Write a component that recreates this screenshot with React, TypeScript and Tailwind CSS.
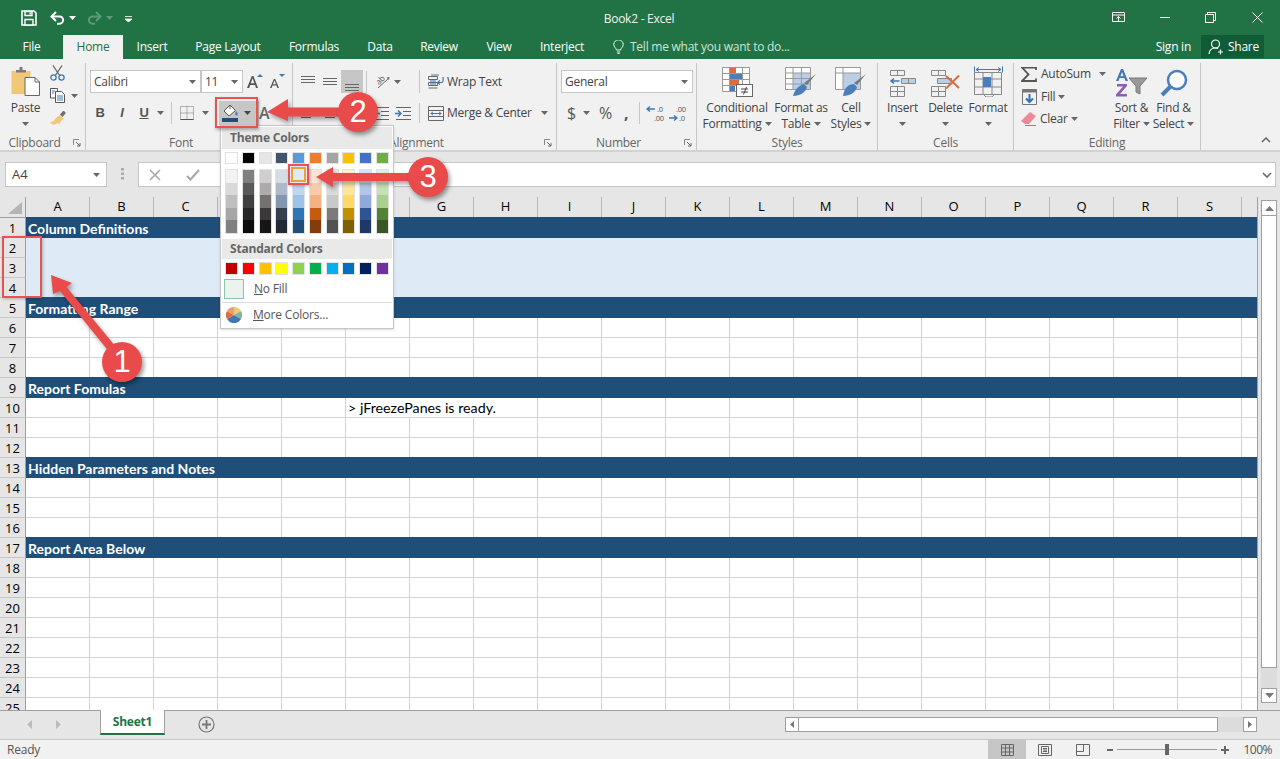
import React from "react";

const UI = "font-['Open_Sans','Noto_Sans',sans-serif]";

const Chev = ({ c = "#666", className = "" }: { c?: string; className?: string }) => (
  <svg width="7" height="4" viewBox="0 0 7 4" className={"shrink-0 " + className}><path d="M0 0h7L3.5 4z" fill={c} /></svg>
);
const Launcher = () => (
  <svg width="8" height="8" viewBox="0 0 8 8" className="shrink-0"><path d="M.5 6V.5H6" fill="none" stroke="#888" /><path d="M3 3l4 4M7 4v3H4" fill="none" stroke="#666" /></svg>
);
const Sep = ({ h = "h-[22px]", mx = "" }: { h?: string; mx?: string }) => <div className={`w-px bg-[#c6c6c6] shrink-0 ${h} ${mx}`} />;

const Save = () => (
  <svg width="16" height="16" viewBox="0 0 16 16"><path d="M1 1h12l2 2v12H1z" fill="none" stroke="#fff" strokeWidth="1.6" /><path d="M4 1.5h7v4H4zM4 9.5h8V15H4z" fill="#217346" stroke="#fff" strokeWidth="1.4" /><path d="M8.5 2.5h1.4v2H8.5z" fill="#fff" /></svg>
);
const Undo = ({ c, flip = false }: { c: string; flip?: boolean }) => (
  <svg width="15" height="14" viewBox="0 0 15 14" style={flip ? { transform: "scaleX(-1)" } : undefined}>
    <path d="M2 5.5h7.5a3.6 3.6 0 0 1 0 7.2H7" fill="none" stroke={c} strokeWidth="2" />
    <path d="M6 1L1.5 5.5 6 10" fill="none" stroke={c} strokeWidth="2" />
  </svg>
);
const PersonPlus = () => (
  <svg width="17" height="16" viewBox="0 0 17 16" fill="none" stroke="#fff" strokeWidth="1.2">
    <circle cx="7.5" cy="5" r="4" /><path d="M1 15c.3-3.5 2.6-6 6.5-6 1 0 2 .2 2.6.6" /><path d="M12.5 10.5v5M10 13h5" />
  </svg>
);
const Paste = () => (
  <svg width="30" height="30" viewBox="0 0 30 30">
    <rect x="0.5" y="5" width="19" height="23" fill="#f0c878" />
    <path d="M5 6V4h3.5V1h3v3H15v2.5H5z" fill="#7c7c7c" />
    <path d="M14 11.5h10l4.5 4.5v13.5H14z" fill="#fff" stroke="#666" />
    <path d="M24 11.5V16h4.5" fill="none" stroke="#666" />
  </svg>
);
const Scissors = () => (
  <svg width="15" height="16" viewBox="0 0 15 16" fill="none">
    <path d="M3 .5l7 10.5M12 .5L5 11" stroke="#666" strokeWidth="1.3" />
    <circle cx="3.5" cy="12.5" r="2.6" stroke="#3f78b5" strokeWidth="1.3" /><circle cx="11.5" cy="12.5" r="2.6" stroke="#3f78b5" strokeWidth="1.3" />
  </svg>
);
const Copy = () => (
  <svg width="16" height="15" viewBox="0 0 16 15" fill="none" stroke="#555">
    <path d="M.5.5h7V10h-7z" fill="#fff" /><path d="M5.5 3.5h6l3 3v8h-9z" fill="#fff" />
    <path d="M7 8h6M7 10h6M7 12h6M2 3h3M2 5h2" stroke="#3f78b5" />
  </svg>
);
const Painter = () => (
  <svg width="17" height="15" viewBox="0 0 17 15">
    <path d="M10 5l4 4-2 1-3 4-2-1-1 1-3 1c-1-1-2-1.500-3-3 3 0 4-1 5-3l2-2z" fill="#f0c878" />
    <path d="M10 4.500L13 1c1-.5 3 1 2.500 2.500L12.500 7z" fill="#6f6f6f" />
  </svg>
);
const FontA = ({ size, up }: { size: number; up: boolean }) => (
  <svg width="17" height="17" viewBox="0 0 17 17">
    <path d={size === 2 ? "M0 15L4.800 3h1.600L11 15H9l-1-3H3.200l-1 3zM3.800 10.300h3.600L5.600 5.300z" : "M1 15L4.800 6h1.400L10 15H8.400l-.9-2.400H3.500L2.600 15zM4 11.200h3l-1.500-4z"} fill="#555" />
    <path d={up ? "M10 4l3-3 3 3z" : "M10 1h6l-3 3z"} fill="#3f78b5" />
  </svg>
);
const Bars = ({ lines }: { lines: [number, number, number][] }) => (
  <svg width="16" height="14" viewBox="0 0 16 14">
    {lines.map(([y, x1, x2], i) => <path key={i} d={`M${x1} ${y}.5H${x2}`} stroke="#666" />)}
  </svg>
);
const Borders = () => (
  <svg width="14" height="14" viewBox="0 0 14 14" fill="none"><path d="M.5.5h13v13H.5zM.5 7h13M7 .5v13" stroke="#777" strokeDasharray="1 1" /><path d="M.5 13.500h13" stroke="#555" /></svg>
);
const FillBucket = () => (
  <svg width="18" height="18" viewBox="0 0 18 18">
    <path d="M8 1L2 7l5 5 6.500-5.500z" fill="#fff" stroke="#555" />
    <path d="M8 1v4" stroke="#555" />
    <path d="M14 7c1.500 2 2 3 1.500 4-.5.500-1.500.500-2 0-.5-1 0-2 .5-4z" fill="#3f78b5" />
    <rect x="0" y="14" width="16" height="4" fill="#1f4e79" />
  </svg>
);
const Orient = () => (
  <svg width="18" height="17" viewBox="0 0 18 17">
    <text x="3" y="11" fontSize="8" fill="#555" transform="rotate(-45 6 8)" fontFamily="Open Sans">ab</text>
    <path d="M5 15L16 5" stroke="#666" /><path d="M16.500 4l-3 .5 2.500 2.500z" fill="#666" />
  </svg>
);
const Indent = ({ dir }: { dir: "l" | "r" }) => (
  <svg width="16" height="13" viewBox="0 0 16 13" fill="none">
    <path d="M1 .5h15M8 4.500h8M8 8.500h8M1 12.500h15" stroke="#666" />
    <path d={dir === "l" ? "M7 6.500H1M4 3.500l-3 3 3 3" : "M0 6.500h6M3 3.500l3 3-3 3"} stroke="#3f78b5" strokeWidth="1.5" />
  </svg>
);
const Wrap = () => (
  <svg width="16" height="16" viewBox="0 0 16 16" fill="none">
    <path d="M.5 2.500h9v3h-9zM.5 8.500h9v3h-9zM.5 14h9" stroke="#666" />
    <path d="M3 1h8M2 7h6M2 10h6" stroke="#3f78b5" />
    <path d="M9 8.500h5c1 0 1.500-3.500 1-5.500M12 6.500L9.500 8.500 12 10.500" stroke="#3f78b5" strokeWidth="1.2" />
  </svg>
);
const Merge = () => (
  <svg width="16" height="15" viewBox="0 0 16 15" fill="none">
    <path d="M.5.5h15v14H.5zM.5 4.500h15M.5 10.500h15" stroke="#666" />
    <path d="M2.500 7.500h11M5 5.800L3 7.500l2 1.700M11 5.800l2 1.700-2 1.700" stroke="#3f78b5" />
  </svg>
);
const Dec = ({ inc }: { inc: boolean }) => (
  <svg width="21" height="17" viewBox="0 0 21 17">
    <text x={inc ? 8 : 11} y="7" fontSize="7.500" fill="#555" fontFamily="Open Sans">{inc ? ".00" : ".0"}</text>
    <text x={inc ? 11 : 8} y="16" fontSize="7.500" fill="#555" fontFamily="Open Sans">{inc ? ".0" : ".00"}</text>
    <path d={inc ? "M1 13h8M6 10.500L9 13l-3 2.500" : "M1 4h8M4 1.500L1 4l3 2.500"} fill="none" stroke="#3f78b5" strokeWidth="1.4" />
  </svg>
);
const CondFmt = () => (
  <svg width="31" height="30" viewBox="0 0 31 30">
    <path d="M.5.500h27v24H.5zM.5 6.500h27M.5 12.500h27M.5 18.500h27M7.500.500v24M20.500.500v24" fill="#fff" stroke="#999" />
    <rect x="8" y="1" width="6" height="5" fill="#dd6b3f" /><rect x="8" y="7" width="12" height="5" fill="#4a7ebb" />
    <rect x="8" y="13" width="9" height="5" fill="#dd6b3f" /><rect x="8" y="19" width="5" height="5" fill="#4a7ebb" />
    <rect x="14.500" y="17.500" width="16" height="12" fill="#fff" stroke="#666" />
    <path d="M19 22h7M19 25h7M24.500 20l-3 7.500" stroke="#444" fill="none" />
  </svg>
);
const FmtTable = () => (
  <svg width="32" height="30" viewBox="0 0 32 30">
    <path d="M.5.500h25v22H.5z" fill="#fff" stroke="#999" />
    <rect x="8" y="6" width="17" height="16" fill="#b9cfe6" />
    <path d="M.5 6h25M.5 11.500h25M.5 17h25M8 .5v22M16.500.5v22" stroke="#999" fill="none" />
    <path d="M31 7L22 18l-3-2z" fill="#777" />
    <path d="M8 29c2-8 7-11 11-12l3 3c-1 5-7 9-14 9z" fill="#4a7ebb" />
  </svg>
);
const CellStyles = () => (
  <svg width="32" height="30" viewBox="0 0 32 30">
    <path d="M.5.500h25v22H.5z" fill="#fff" stroke="#999" />
    <rect x="8" y="6" width="17" height="16" fill="#b9cfe6" />
    <path d="M.5 6h25M8 .5v22" stroke="#999" fill="none" />
    <path d="M31 7L22 18l-3-2z" fill="#777" />
    <path d="M8 29c1-5 2-11 11-12l3 3c-1 5-7 9-14 9z" fill="#4a7ebb" />
  </svg>
);
const InsertIc = () => (
  <svg width="27" height="27" viewBox="0 0 27 27" fill="none" stroke="#888">
    <path d="M1.500.500h14v5h-14zM8.500.500v5M1.500 16.500h14v10h-14zM1.500 21.500h14M8.500 16.500v10" />
    <path d="M12.500 8.500h14v5h-14zM19.500 8.500v5" fill="#b9cfe6" />
    <path d="M10.500 11H2M5 8.500L2 11l3 2.500" stroke="#3f78b5" strokeWidth="1.5" />
  </svg>
);
const DeleteIc = () => (
  <svg width="31" height="27" viewBox="0 0 31 27" fill="none" stroke="#888">
    <path d="M1.500.500h14v5h-14zM8.500.500v5M1.500 16.500h14v10h-14zM1.500 21.500h14M8.500 16.500v10" />
    <path d="M7.500 8.500h14v5h-14z" fill="#b9cfe6" />
    <path d="M16 6l13 12M29 5.500L16 18.500" stroke="#dd6b3f" strokeWidth="2" />
  </svg>
);
const FormatIc = () => (
  <svg width="29" height="31" viewBox="0 0 29 31" fill="none" stroke="#888">
    <path d="M2 3.500h25M5 1.500l-3 2 3 2M24 1.500l3 2-3 2M.5.500v6M28.500.500v6" stroke="#3f78b5" />
    <path d="M.5 6.500h27v22H.5zM.5 13h27M.5 21h27M9 6.500v22M18 6.500v22" />
    <rect x="9" y="11" width="8" height="10" fill="#4a7ebb" stroke="none" />
    <path d="M10 29l2 2h6l2-2" />
  </svg>
);
const Sigma = () => (
  <svg width="16" height="15" viewBox="0 0 16 15"><path d="M15 3V.5H1l6.500 7L1 14h14v-2.500" fill="none" stroke="#555" strokeWidth="1.800" /></svg>
);
const FillDown = () => (
  <svg width="15" height="16" viewBox="0 0 15 16" fill="none">
    <path d="M.5.500h14v15H.5z" stroke="#777" /><path d="M.5.500h14v3H.5z" fill="#777" />
    <path d="M7.500 5v8M4 9.500l3.500 3.500L11 9.500" stroke="#2e75b5" strokeWidth="2" />
  </svg>
);
const Eraser = () => (
  <svg width="15" height="14" viewBox="0 0 15 14"><path d="M9 0l6 4-7 8H4L0 9z" fill="#ea8a98" /><path d="M4 13.500h11" stroke="#888" /></svg>
);
const SortIc = () => (
  <svg width="32" height="28" viewBox="0 0 32 28">
    <path d="M0 12L5 0h2l5 12h-2.500l-1-3h-5l-1 3zM4.500 7.200h3L6 3z" fill="#3f78b5" />
    <path d="M1 15h10v2l-7 8h7v2.500H0v-2l7-8H1z" fill="#8a5fb5" />
    <path d="M13 9h18l-7 8v8l-4-2v-6z" fill="#999" stroke="#777" />
  </svg>
);
const Find = () => (
  <svg width="28" height="28" viewBox="0 0 28 28" fill="none">
    <circle cx="17" cy="11" r="9" stroke="#4a7ebb" strokeWidth="2.500" fill="#fff" />
    <path d="M10.500 17.500L2 26" stroke="#4a7ebb" strokeWidth="4" />
  </svg>
);

const Big = ({ icon, l1, l2, w }: { icon: React.ReactNode; l1: string; l2?: string; w: string }) => (
  <div className={`flex flex-col items-center shrink-0 ${w}`}>
    <div className="h-[34px] flex items-end justify-center">{icon}</div>
    <div className="h-[14px] mt-[4px] leading-[14px] whitespace-nowrap">{l1}</div>
    <div className="h-[16px] mt-[1px] leading-[16px] whitespace-nowrap flex items-center gap-[3px]">{l2}<Chev /></div>
  </div>
);

const Group = ({ w, label, launcher, children, lc = "" }: { w: string; label: string; launcher?: boolean; children: React.ReactNode; lc?: string }) => (
  <div className={`${w} shrink-0 h-full flex flex-col border-r border-[#c6c6c6]`}>
    <div className="h-[75px] flex">{children}</div>
    <div className={`h-[14px] flex items-center text-[#666] ${lc}`}>
      <span className="flex-1 text-center leading-[14px]">{label}</span>
      {launcher && <span className="w-[16px] pr-[4px] flex justify-end"><Launcher /></span>}
    </div>
  </div>
);

const Box = ({ w, text }: { w: string; text: string }) => (
  <div className={`${w} h-[23px] bg-white border border-[#c6c6c6] flex items-center justify-between pl-[3px] pr-[4px] shrink-0`}>
    <span>{text}</span><Chev />
  </div>
);

const Ribbon = () => (
  <div className="h-[93px] bg-[#f1f1f1] border-b-2 border-[#d2d2d2] flex pt-[4px] text-[12px] text-[#444] tracking-[-0.25px] shrink-0">
    <Group w="w-[86px]" label="Clipboard" launcher>
      <div className="w-[50px] flex flex-col items-center pl-[1px]">
        <div className="mt-[3px]"><Paste /></div>
        <div className="mt-[5px] leading-[14px]">Paste</div>
        <Chev className="mt-[7px]" />
      </div>
      <div className="flex flex-col pt-[2px] gap-[7px]">
        <Scissors />
        <div className="flex items-center gap-[5px]"><Copy /><Chev /></div>
        <Painter />
      </div>
    </Group>
    <Group w="w-[207px]" label="Font" launcher>
      <div className="flex flex-col pl-[4px] pt-[7px]">
        <div className="flex items-center">
          <Box w="w-[111px]" text="Calibri" />
          <Box w="w-[42px]" text="11" />
          <div className="ml-[4px] flex gap-[5px]"><FontA size={2} up /><FontA size={1} up={false} /></div>
        </div>
        <div className="flex items-center mt-[8px] h-[24px] text-[13px] text-[#555]">
          <span className="w-[22px] text-center font-bold font-['Liberation_Sans'] ml-[-1px]">B</span>
          <span className="w-[22px] text-center italic font-bold font-['Liberation_Sans']">I</span>
          <span className="w-[22px] text-center underline font-bold font-['Liberation_Sans']">U</span>
          <Chev className="ml-[2px]" />
          <Sep mx="ml-[7px]" />
          <div className="ml-[8px]"><Borders /></div>
          <Chev className="ml-[8px]" />
          <div className="ml-[10px] w-[40px] h-[24px] bg-[#c6c6c6] flex items-center gap-[4px] pl-[3px]"><FillBucket /><Chev c="#444" /></div>
          <span className="text-[16px] text-[#666] font-semibold">A</span>
        </div>
      </div>
    </Group>
    <Group w="w-[264px]" label="Alignment" launcher>
      <div className="flex flex-col pl-[4px] pt-[7px] w-[127px] shrink-0">
        <div className="flex items-center">
          <div className="w-[22px] flex justify-center"><Bars lines={[[1, 1, 15], [4, 1, 15], [7, 1, 15]]} /></div>
          <div className="w-[22px] flex justify-center"><Bars lines={[[3, 1, 15], [6, 1, 15], [9, 1, 15]]} /></div>
          <div className="w-[22px] h-[23px] bg-[#c6c6c6] flex justify-center items-end pb-[1px]"><Bars lines={[[6, 1, 15], [9, 1, 15], [12, 1, 15]]} /></div>
          <Sep mx="ml-[3px]" />
          <div className="ml-[6px]"><Orient /></div>
          <Chev className="ml-[3px]" />
          <Sep mx="ml-auto" h="h-[23px]" />
        </div>
        <div className="flex items-center mt-[10px]">
          <div className="w-[22px] flex justify-center"><Bars lines={[[2, 1, 15], [5, 1, 11], [8, 1, 15], [11, 1, 11]]} /></div>
          <div className="w-[22px] flex justify-center"><Bars lines={[[2, 1, 15], [5, 3, 13], [8, 1, 15], [11, 3, 13]]} /></div>
          <div className="w-[22px] flex justify-center"><Bars lines={[[2, 1, 15], [5, 5, 15], [8, 1, 15], [11, 5, 15]]} /></div>
          <div className="ml-[10px]"><Indent dir="l" /></div>
          <div className="ml-[6px]"><Indent dir="r" /></div>
          <Sep mx="ml-auto" h="h-[20px]" />
        </div>
      </div>
      <div className="flex flex-col pl-[8px] pt-[9px]">
        <div className="flex items-center gap-[3px] h-[20px]"><Wrap /><span>Wrap Text</span></div>
        <div className="flex items-center gap-[3px] h-[20px] mt-[11px]"><Merge /><span>Merge &amp; Center</span><Chev className="ml-[6px]" /></div>
      </div>
    </Group>
    <Group w="w-[140px]" label="Number" launcher>
      <div className="flex flex-col pl-[4px] pt-[7px]">
        <Box w="w-[132px]" text="General" />
        <div className="flex items-center mt-[8px] h-[24px] text-[#555]">
          <span className="ml-[6px] text-[16px]">$</span><Chev className="ml-[7px]" />
          <span className="ml-[9px] text-[16px]">%</span>
          <span className="ml-[12px] text-[16px] font-bold">,</span>
          <Sep mx="ml-[11px]" />
          <div className="ml-[6px]"><Dec inc={false} /></div>
          <div className="ml-[1px]"><Dec inc /></div>
        </div>
      </div>
    </Group>
    <Group w="w-[181px]" label="Styles">
      <div className="flex pl-[1px]">
        <Big w="w-[78px]" icon={<CondFmt />} l1="Conditional" l2="Formatting" />
        <Big w="w-[50px]" icon={<FmtTable />} l1="Format as" l2="Table" />
        <Big w="w-[50px]" icon={<CellStyles />} l1="Cell" l2="Styles" />
      </div>
    </Group>
    <Group w="w-[136px]" label="Cells">
      <div className="flex pl-[3px]">
        <Big w="w-[43px]" icon={<InsertIc />} l1="Insert" />
        <Big w="w-[43px]" icon={<DeleteIc />} l1="Delete" />
        <Big w="w-[42px]" icon={<FormatIc />} l1="Format" />
      </div>
    </Group>
    <Group w="w-[187px]" label="Editing">
      <div className="flex flex-col pl-[7px] pt-[1px] w-[96px] shrink-0">
        <div className="flex items-center h-[20px] gap-[4px]"><Sigma /><span>AutoSum</span><Chev className="ml-[4px]" /></div>
        <div className="flex items-center h-[20px] mt-[3px] gap-[4px]"><span className="ml-[1px]"><FillDown /></span><span>Fill</span><Chev className="ml-[-1px]" /></div>
        <div className="flex items-center h-[20px] mt-[2px] gap-[4px]"><Eraser /><span>Clear</span><Chev className="ml-[-1px]" /></div>
      </div>
      <div className="flex">
        <Big w="w-[43px]" icon={<SortIc />} l1="Sort &" l2="Filter" />
        <Big w="w-[41px]" icon={<Find />} l1="Find &" l2="Select" />
      </div>
    </Group>
    <div className="flex-1 flex justify-end items-end pr-[9px] pb-[7px]">
      <svg width="10" height="6" viewBox="0 0 10 6"><path d="M1 5l4-4 4 4" fill="none" stroke="#666" strokeWidth="1.500" /></svg>
    </div>
  </div>
);

const tabs: [string, string][] = [["File", "w-[63px]"], ["Home", "w-[60px]"], ["Insert", "w-[58px]"], ["Page Layout", "w-[94px]"], ["Formulas", "w-[78px]"], ["Data", "w-[54px]"], ["Review", "w-[64px]"], ["View", "w-[56px]"], ["Interject", "w-[70px]"]];

const Top = () => (
  <div className="bg-[#217346] text-white text-[12px] tracking-[-0.25px] shrink-0">
    <div className="h-[35px] flex items-center">
      <div className="w-[547px] flex items-center shrink-0">
        <div className="ml-[21px]"><Save /></div>
        <div className="ml-[13px]"><Undo c="#fff" /></div>
        <Chev c="#fff" className="ml-[4px]" />
        <div className="ml-[11px]"><Undo c="#5c9a78" flip /></div>
        <Chev c="#5c9a78" className="ml-[4px]" />
        <svg width="7" height="6" viewBox="0 0 7 6" className="ml-[12px] mt-[2px]"><path d="M0 .5h7M0 3h7l-3.500 3z" stroke="#fff" strokeWidth="0.800" fill="#fff" /></svg>
      </div>
      <div className="w-[184px] text-center mt-[2px] text-[#f2f2f2] shrink-0">Book2 - Excel</div>
      <div className="flex-1 flex items-center justify-end pr-[17px]">
        <svg width="13" height="11" viewBox="0 0 13 11" fill="none" stroke="#fff"><path d="M.5.5h12v9H.5zM.5 3h12M6.500 9V4.500M4.500 6.500l2-2 2 2" /></svg>
        <div className="w-[10px] h-px bg-white ml-[35px]" />
        <svg width="11" height="11" viewBox="0 0 11 11" className="ml-[35px]" fill="none" stroke="#fff"><path d="M.5 2.500h8v8h-8zM2.500 2.500V.5h8v8h-2" /></svg>
        <svg width="11" height="11" viewBox="0 0 11 11" className="ml-[36px]" stroke="#fff"><path d="M.5.5l10 10M10.500.5l-10 10" /></svg>
      </div>
    </div>
    <div className="h-[24px] flex items-center whitespace-nowrap">
      {tabs.map(([t, w]) => (
        <div key={t} className={`${w} h-full flex items-center justify-center ${t === "Home" ? "bg-[#f1f1f1] text-[#217346]" : ""}`}>{t}</div>
      ))}
      <svg width="11" height="14" viewBox="0 0 11 14" className="ml-[16px]" fill="none" stroke="#dfe" strokeWidth="1"><path d="M3.500 10C3 8 .8 7 .8 4.500a4.700 4.700 0 0 1 9.400 0C10.200 7 8 8 7.500 10zM3.800 12h3.400M4.500 13.500h2" /></svg>
      <span className="ml-[6px] text-[#cfe3d8]">Tell me what you want to do...</span>
      <span className="ml-auto">Sign in</span>
      <div className="ml-[10px] mr-[16px] w-[63px] h-[23px] self-start bg-[#0f5c37] flex items-center pl-[7px] gap-[3px]"><PersonPlus /><span>Share</span></div>
    </div>
  </div>
);

const Formula = () => (
  <div className="h-[45px] bg-[#e6e6e6] flex items-start pt-[10px] text-[13px] shrink-0">
    <div className="ml-[5px] w-[102px] h-[25px] bg-white border border-[#c6c6c6] flex items-center justify-between pl-[6px] pr-[6px] text-[#444]"><span>A4</span><Chev /></div>
    <svg width="3" height="12" viewBox="0 0 3 12" className="ml-[14px] mt-[6px]"><path d="M0 0h3v2.500H0zM0 4.500h3V7H0zM0 9h3v2.500H0z" fill="#aaa" /></svg>
    <div className="ml-[14px] w-[1138px] h-[25px] bg-white border border-[#c6c6c6] flex items-center pl-[10px]">
      <svg width="12" height="12" viewBox="0 0 12 12" stroke="#aaa" strokeWidth="1.600"><path d="M1 1l10 10M11 1L1 11" /></svg>
      <svg width="14" height="12" viewBox="0 0 14 12" className="ml-[25px]" fill="none" stroke="#aaa" strokeWidth="2.200"><path d="M1 7l3.500 3.500L13 1" /></svg>
      <svg width="10" height="6" viewBox="0 0 10 6" className="ml-auto mr-[3px]"><path d="M1 1l4 4 4-4" fill="none" stroke="#666" strokeWidth="1.600" /></svg>
    </div>
  </div>
);

const cols = "ABCDEFGHIJKLMNOPQRS".split("");
const darkRows: Record<number, string> = { 1: "Column Definitions", 5: "Formatting Range", 9: "Report Fomulas", 13: "Hidden Parameters and Notes", 17: "Report Area Below" };
const calibri = "font-['Lato','Carlito',sans-serif]";

const Row = ({ n }: { n: number }) => {
  const nextDark = !!darkRows[n + 1];
  const dark = darkRows[n];
  const light = n >= 2 && n <= 4;
  const line = nextDark || dark ? "border-[#1f4e79]" : "border-[#d4d4d4]";
  return (
    <div className="flex h-[20px] shrink-0">
      <div className="w-[26px] h-full bg-[#e6e6e6] border-r border-b border-r-[#9f9f9f] border-b-[#c6c6c6] flex items-center justify-center text-[13px] text-black shrink-0 pt-[2px]">{n}</div>
      {dark ? (
        <div className={`flex-1 h-[21px] -mt-px bg-[#1f4e79] text-white font-bold pl-[2px] pt-px flex items-center text-[14px] ${calibri}`}>{dark}</div>
      ) : light ? (
        <div className="flex-1 h-full bg-[#deebf6]" />
      ) : (
        <>
          {cols.map((c) =>
            n === 10 && (c === "G" || c === "H") ? null : (
              <div key={c} className={`${n === 10 && c === "F" ? "w-[192px]" : "w-[64px]"} h-full border-r border-b ${line} ${nextDark ? "border-r-[#d4d4d4]" : ""} shrink-0 text-[14.25px] text-black pl-[2px] pt-px flex items-center whitespace-nowrap ${calibri}`}>
                {n === 10 && c === "F" ? "> jFreezePanes is ready." : ""}
              </div>
            )
          )}
          <div className={`flex-1 h-full border-b ${line}`} />
        </>
      )}
    </div>
  );
};

const Sheet = () => (
  <div className="flex h-[513px] bg-[#e6e6e6] shrink-0 overflow-hidden">
    <div className="w-[1258px] shrink-0 flex flex-col border-r border-[#9f9f9f] bg-white overflow-hidden">
      <div className="h-[21px] shrink-0 flex bg-[#e6e6e6] border-b border-[#9f9f9f] text-[13px] text-black">
        <div className="w-[26px] h-full border-r border-[#9f9f9f] flex items-end justify-end pr-[3px] pb-[3px]">
          <svg width="14" height="12" viewBox="0 0 14 12"><path d="M14 0v12H0z" fill="#b5b5b5" /></svg>
        </div>
        {cols.map((c) => <div key={c} className="w-[64px] h-full border-r border-[#b5b5b5] flex items-center justify-center">{c}</div>)}
      </div>
      {Array.from({ length: 25 }, (_, i) => <Row key={i} n={i + 1} />)}
    </div>
    <div className="w-[21px] pl-[3px] pt-[3px] flex flex-col">
      <div className="w-[16px] h-[16px] bg-white border border-[#9f9f9f] flex items-center justify-center"><svg width="9" height="5" viewBox="0 0 9 5"><path d="M4.500 0L9 5H0z" fill="#777" /></svg></div>
      <div className="w-[16px] h-[452px] bg-white border border-[#9f9f9f] border-t-0" />
      <div className="w-[16px] flex-1 bg-[#dcdcdc]" />
      <div className="w-[16px] h-[15px] bg-white border border-[#9f9f9f] flex items-center justify-center mb-[7px]"><svg width="9" height="5" viewBox="0 0 9 5"><path d="M4.500 5L9 0H0z" fill="#777" /></svg></div>
    </div>
  </div>
);

const TabBar = () => (
  <div className="h-[29px] bg-[#e6e6e6] border-t border-[#9f9f9f] flex items-start shrink-0 text-[12px]">
    <svg width="5" height="9" viewBox="0 0 5 9" className="ml-[27px] mt-[9px]"><path d="M5 0v9L0 4.500z" fill="#bbb" /></svg>
    <svg width="5" height="9" viewBox="0 0 5 9" className="ml-[24px] mt-[9px]"><path d="M0 0v9l5-4.500z" fill="#bbb" /></svg>
    <div className={`ml-[39px] -mt-px w-[65px] h-[25px] bg-white border-x border-[#9f9f9f] border-b-2 border-b-[#217346] flex items-center justify-center text-[#217346] font-bold tracking-[-0.2px] ${UI}`}>Sheet1</div>
    <svg width="17" height="17" viewBox="0 0 17 17" className="ml-[33px] mt-[5px]" fill="none" stroke="#777"><circle cx="8.500" cy="8.500" r="7.500" strokeWidth="1.200" /><path d="M8.500 4v9M4 8.500h9" strokeWidth="1.800" /></svg>
    <div className="ml-[570px] mt-[6px] h-[15px] w-[472px] flex">
      <div className="w-[14px] h-full bg-white border border-[#9f9f9f] flex items-center justify-center"><svg width="4" height="7" viewBox="0 0 4 7"><path d="M4 0v7L0 3.500z" fill="#777" /></svg></div>
      <div className="w-[419px] h-full bg-white border border-[#9f9f9f] border-l-0" />
      <div className="flex-1 bg-[#dcdcdc]" />
      <div className="w-[14px] h-full bg-white border border-[#9f9f9f] flex items-center justify-center"><svg width="4" height="7" viewBox="0 0 4 7"><path d="M0 0v7l4-3.500z" fill="#777" /></svg></div>
    </div>
  </div>
);

const Status = () => (
  <div className="h-[20px] bg-[#f1f1f1] border-t border-[#c6c6c6] flex items-center text-[12px] text-[#555] tracking-[-0.2px] shrink-0">
    <span className="ml-[7px]">Ready</span>
    <div className="ml-auto w-[38px] h-full bg-[#c6c6c6] flex items-center justify-center">
      <svg width="13" height="12" viewBox="0 0 13 12" fill="none" stroke="#666"><path d="M.5.5h12v11H.5zM.5 4h12M.5 8h12M4.500.5v11M8.500.5v11" /></svg>
    </div>
    <div className="w-[38px] flex justify-center"><svg width="14" height="12" viewBox="0 0 14 12" fill="none" stroke="#666"><path d="M.5.500h13v11H.5zM3.500 2.500h7v7h-7zM5 4.500h4M5 6h4M5 7.500h4" /></svg></div>
    <div className="w-[38px] flex justify-center"><svg width="14" height="12" viewBox="0 0 14 12" fill="none" stroke="#666"><path d="M.5.500h13v11H.5zM.5 7.500h7v-7" /></svg></div>
    <div className="w-[6px] h-[2px] bg-[#666] ml-[5px]" />
    <div className="w-[100px] h-px bg-[#999] ml-[4px] flex items-center justify-center"><div className="w-[4px] h-[11px] bg-[#666] shrink-0" /></div>
    <svg width="8" height="8" viewBox="0 0 8 8" className="ml-[4px]" stroke="#666" strokeWidth="2"><path d="M0 4h8M4 0v8" /></svg>
    <span className="ml-[14px] mr-[8px] tracking-[-0.5px]">100%</span>
  </div>
);

const theme = ["#ffffff", "#000000", "#e7e6e6", "#44546a", "#5b9bd5", "#ed7d31", "#a5a5a5", "#ffc000", "#4472c4", "#70ad47"];
const shades = [
  ["#f2f2f2", "#d9d9d9", "#bfbfbf", "#a6a6a6", "#808080"],
  ["#7f7f7f", "#595959", "#404040", "#262626", "#0d0d0d"],
  ["#d0cece", "#aeabab", "#767171", "#3a3838", "#171616"],
  ["#d6dce4", "#adb9ca", "#8497b0", "#333f4f", "#222b35"],
  ["#deebf6", "#bdd7ee", "#9dc3e6", "#2e75b5", "#1f4e79"],
  ["#fbe5d5", "#f8cbad", "#f4b183", "#c55a11", "#833c0b"],
  ["#ededed", "#dbdbdb", "#c9c9c9", "#7b7b7b", "#525252"],
  ["#fff2cc", "#fee599", "#ffd966", "#bf9000", "#7f6000"],
  ["#dae3f3", "#b4c6e7", "#8eaadb", "#2f5496", "#1f3864"],
  ["#e2efd9", "#c5e0b3", "#a8d08d", "#538135", "#375623"],
];
const standard = ["#c00000", "#ff0000", "#ffc000", "#ffff00", "#92d050", "#00b050", "#00b0f0", "#0070c0", "#002060", "#7030a0"];

const Swatch = ({ c, h = "h-[13px]" }: { c: string; h?: string }) => (
  <div className={`w-[13px] ${h} border border-[#e2e2e2] shrink-0`} style={{ background: c }} />
);

const Dropdown = () => (
  <div className="absolute left-[220px] top-[125px] w-[174px] h-[204px] bg-white border border-[#c6c6c6] p-px z-20 text-[12px] text-[#555] tracking-[-0.2px] shadow-sm">
    <div className="h-[22px] bg-[#e9e9e9] flex items-center pl-[8px] font-bold text-[#666]">Theme Colors</div>
    <div className="flex justify-between px-[3px] mt-[3px]">{theme.map((c) => <Swatch key={c} c={c} h="h-[12px]" />)}</div>
    <div className="flex justify-between px-[3px] mt-[5px]">
      {shades.map((s, i) => (
        <div key={i} className="flex flex-col w-[13px] border border-[#e2e2e2] shrink-0">
          {s.map((c) => <div key={c} className="h-[12.6px]" style={{ background: c }} />)}
        </div>
      ))}
    </div>
    <div className="h-[20px] bg-[#e9e9e9] mt-[5px] flex items-center pl-[8px] font-bold text-[#666]">Standard Colors</div>
    <div className="flex justify-between px-[3px] mt-[3px]">{standard.map((c) => <Swatch key={c} c={c} />)}</div>
    <div className="flex items-center mt-[4px] h-[21px] pl-[2px]">
      <div className="w-[20px] h-[20px] bg-[#eaf3ee] border border-[#8fc3a5]" />
      <span className="ml-[10px]"><span className="underline">N</span>o Fill</span>
    </div>
    <div className="h-px bg-[#dcdcdc] mt-[2px]" />
    <div className="flex items-center h-[25px] pl-[4px]">
      <svg width="16" height="16" viewBox="0 0 16 16">
        <path d="M8 8V0a8 8 0 0 1 7 4z" fill="#f0c878" /><path d="M8 8l7-4a8 8 0 0 1 0 8z" fill="#82b59a" />
        <path d="M8 8l7 4a8 8 0 0 1-14 0z" fill="#3f78b5" /><path d="M8 8l-7 4a8 8 0 0 1 0-8z" fill="#e06b3f" /><path d="M8 8L1 4a8 8 0 0 1 7-4z" fill="#e8a070" />
      </svg>
      <span className="ml-[11px]"><span className="underline">M</span>ore Colors...</span>
    </div>
  </div>
);

const Badge = ({ n, pos }: { n: number; pos: string }) => (
  <div className={`absolute ${pos} w-[40px] h-[40px] rounded-full bg-[#e94b4b] text-white flex items-center justify-center text-[31px] font-['Liberation_Sans',sans-serif] shadow-[2px_3px_4px_rgba(0,0,0,0.4)] z-30`}>{n}</div>
);

const Annotations = () => (
  <>
    <div className="absolute left-[2px] top-[236px] w-[40px] h-[62px] border-2 border-[#e8534f] z-30 shadow-[1px_1px_3px_rgba(0,0,0,0.25)]" />
    <div className="absolute left-[215px] top-[97px] w-[43px] h-[31px] border-2 border-[#e8534f] z-30 shadow-[1px_2px_3px_rgba(0,0,0,0.3)]" />
    <div className="absolute left-[288px] top-[164px] w-[21px] h-[21px] border-2 border-[#e8534f] bg-[#deebf6] z-30 p-[1px] shadow-[1px_1px_3px_rgba(0,0,0,0.3)]">
      <div className="w-full h-full border-2 border-[#f0a030] bg-[#deebf6]" />
    </div>
    <svg width="1280" height="759" viewBox="0 0 1280 759" className="absolute left-0 top-0 z-30 pointer-events-none drop-shadow-[2px_3px_2px_rgba(0,0,0,0.35)]">
      <path d="M267 112L288 99V107.500H345V116.500H288V121z" fill="#e94b4b" />
      <path d="M316 177L333 167V173H415V181H333V187z" fill="#e94b4b" />
      <path d="M51 275L72 283 66.500 287 125 358 119 364 60 291 53 294z" fill="#e94b4b" />
    </svg>
    <Badge n={1} pos="left-[102px] top-[342px]" />
    <Badge n={2} pos="left-[338px] top-[92px]" />
    <Badge n={3} pos="left-[408px] top-[157px]" />
  </>
);

export default function App() {
  return (
    <div className={`relative w-[1280px] h-[759px] overflow-hidden flex flex-col bg-white ${UI}`}>
      <Top />
      <Ribbon />
      <Formula />
      <Sheet />
      <TabBar />
      <Status />
      <Dropdown />
      <Annotations />
    </div>
  );
}
